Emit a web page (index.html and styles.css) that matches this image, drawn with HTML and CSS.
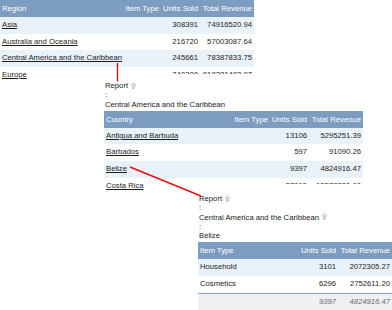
FILE: index.html
```html
<!DOCTYPE html>
<html>
<head>
<meta charset="utf-8">
<link rel="stylesheet" href="styles.css">
</head>
<body>
<div class="canvas">
  <section class="panel p1">
    <table class="grid">
      <colgroup><col class="c-name"><col class="c-type"><col class="c-units"><col class="c-rev"></colgroup>
      <thead><tr><th class="l">Region</th><th>Item Type</th><th>Units Sold</th><th>Total Revenue</th></tr></thead>
      <tbody>
        <tr><td class="l"><a>Asia</a></td><td></td><td>308391</td><td>74916520.94</td></tr>
        <tr><td class="l"><a>Australia and Oceania</a></td><td></td><td>216720</td><td>57003087.64</td></tr>
        <tr><td class="l"><a>Central America and the Caribbean</a></td><td></td><td>245661</td><td>78387833.75</td></tr>
        <tr><td class="l"><a>Europe</a></td><td></td><td>740308</td><td>818281483.07</td></tr>
      </tbody>
    </table>
  </section>

  <section class="panel p2">
    <div class="crumbs">
      <div>Report <svg class="up" viewBox="0 0 6 8"><path d="M3 0.5 L5.6 3.4 L3.9 3.4 L3.9 7.5 L2.1 7.5 L2.1 3.4 L0.4 3.4 Z"/></svg></div>
      <div>:</div>
      <div>Central America and the Caribbean</div>
    </div>
    <table class="grid">
      <colgroup><col class="c-name"><col class="c-type"><col class="c-units"><col class="c-rev"></colgroup>
      <thead><tr><th class="l">Country</th><th>Item Type</th><th>Units Sold</th><th>Total Revenue</th></tr></thead>
      <tbody>
        <tr><td class="l"><a>Antigua and Barbuda</a></td><td></td><td>13106</td><td>5295251.39</td></tr>
        <tr><td class="l"><a>Barbados</a></td><td></td><td>597</td><td>91090.26</td></tr>
        <tr><td class="l"><a>Belize</a></td><td></td><td>9397</td><td>4824916.47</td></tr>
        <tr><td class="l"><a>Costa Rica</a></td><td></td><td>27015</td><td>15578230.60</td></tr>
      </tbody>
    </table>
  </section>

  <section class="panel p3">
    <div class="crumbs">
      <div>Report <svg class="up" viewBox="0 0 6 8"><path d="M3 0.5 L5.6 3.4 L3.9 3.4 L3.9 7.5 L2.1 7.5 L2.1 3.4 L0.4 3.4 Z"/></svg></div>
      <div>:</div>
      <div>Central America and the Caribbean <svg class="up" viewBox="0 0 6 8"><path d="M3 0.5 L5.6 3.4 L3.9 3.4 L3.9 7.5 L2.1 7.5 L2.1 3.4 L0.4 3.4 Z"/></svg></div>
      <div>:</div>
      <div>Belize</div>
    </div>
    <table class="grid">
      <colgroup><col class="c-type"><col class="c-units"><col class="c-rev"></colgroup>
      <thead><tr><th class="l">Item Type</th><th>Units Sold</th><th>Total Revenue</th></tr></thead>
      <tbody>
        <tr><td class="l">Household</td><td>3101</td><td>2072305.27</td></tr>
        <tr><td class="l">Cosmetics</td><td>6296</td><td>2752611.20</td></tr>
      </tbody>
      <tfoot>
        <tr><td class="l"></td><td>9397</td><td>4824916.47</td></tr>
      </tfoot>
    </table>
  </section>

  <svg class="links" width="392" height="310" viewBox="0 0 392 310">
    <line x1="117.5" y1="63" x2="117.5" y2="81.5"/>
    <line x1="130" y1="167" x2="201" y2="196"/>
  </svg>
</div>
</body>
</html>
```

FILE: styles.css
```css
html, body {
  margin: 0;
  padding: 0;
  background: #ffffff;
}

body {
  font-family: "Liberation Sans", Arial, sans-serif;
  font-size: 7.7px;
  color: #1e1e1e;
  overflow: hidden;
  width: 392px;
  height: 310px;
}

.canvas {
  position: relative;
  width: 392px;
  height: 310px;
  overflow: hidden;
}

.panel {
  position: absolute;
  background: #ffffff;
  overflow: hidden;
}

.p1 { left: 0; top: 0; width: 254px; height: 81px; }
.p2 { left: 104px; top: 74px; width: 259px; height: 116px; padding-top: 7px; box-sizing: border-box; }
.p3 { left: 198px; top: 184px; width: 194px; height: 126px; padding-top: 10px; box-sizing: border-box; }

.crumbs {
  line-height: 9.3px;
  padding-left: 1px;
  color: #222222;
  white-space: nowrap;
}

.up {
  width: 5px;
  height: 7px;
  vertical-align: -0.5px;
  margin-left: 1px;
}

.up path {
  fill: none;
  stroke: #8a8a8a;
  stroke-width: 0.7;
}

.grid {
  border-collapse: collapse;
  table-layout: fixed;
  width: 100%;
  margin-top: 2px;
}

.p1 .grid { margin-top: 0; }

.p1 .c-name { width: 123px; }
.p2 .c-name { width: 128px; }
.p3 .c-type { width: 101px; }
.c-type { width: 38px; }
.c-units { width: 39px; }
.c-rev { width: 54px; }

.grid th,
.grid td {
  padding: 0 2px;
  text-align: right;
  white-space: nowrap;
  overflow: hidden;
  font-weight: normal;
}

.grid th {
  background: #7c9cc0;
  color: #ffffff;
  line-height: 17px;
}

.grid td {
  line-height: 16.6px;
}

.grid .l { text-align: left; }

.grid tbody tr:nth-child(odd) td {
  background: #e9f1f9;
}

.grid a {
  color: #1e1e1e;
  text-decoration: underline;
}

.grid tfoot td {
  background: #eef0f2;
  border-top: 1.5px solid #8ba6c4;
  color: #6a6a6a;
  font-style: italic;
}

.links {
  position: absolute;
  left: 0;
  top: 0;
  pointer-events: none;
}

.links line {
  stroke: #e01010;
  stroke-width: 1.4;
}
```
